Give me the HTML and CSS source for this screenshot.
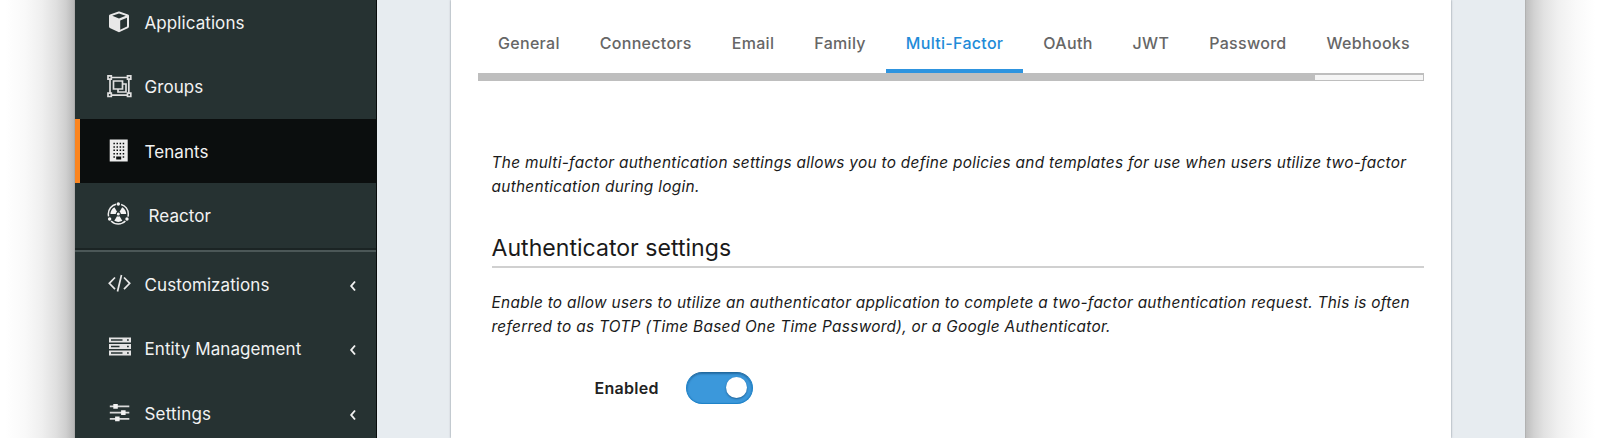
FILE: index.html
```html
<!DOCTYPE html>
<html lang="en">
<head>
<meta charset="utf-8">
<title>Tenants</title>
<link rel="stylesheet" href="styles.css">
</head>
<body>
<div class="window">
  <nav class="sidebar">
    <a class="item"><svg class="icon" viewBox="0 0 28 28"><path d="M13.500 3.600Q14 3.400 14.500 3.600L23 6.400Q24 6.800 24 7.800V18.500Q24 19.500 23.200 19.900L14.600 24Q14 24.300 13.400 24L4.800 19.900Q4 19.500 4 18.500V7.800Q4 6.800 5 6.400Z" fill="#e8e8e8"/><path d="M14 5.600 20.800 7.800 14 10.500 7.200 7.800ZM15.200 12.400 22 9.700V18.600L15.200 21.800Z" fill="#263232"/></svg><span class="label">Applications</span></a>
    <a class="item"><svg class="icon" viewBox="0 0 28 28" fill="none" stroke="#e0e0e0" stroke-width="1.700"><path d="M5 4.500H24M5 22.100H24M5 4.500V22.500M23.800 4.500V22.500"/><path d="M8.500 8H17.500V16H8.500ZM17.500 11H21V19H13V16"/><g fill="#263232"><path d="M3 2.800H6.300V6.100H3ZM22.500 2.800H25.800V6.100H22.500ZM3 20.200H6.300V23.500H3ZM22.500 20.200H25.800V23.500H22.500Z"/></g></svg><span class="label raised">Groups</span></a>
    <a class="item active"><svg class="icon" viewBox="0 0 28 28"><path d="M4.700 2.500H22.700V24.500H4.700Z" fill="#ececec"/><path d="M8.400 6.500H19.700M8.400 9.900H19.700M8.400 13.300H19.700M8.400 16.700H19.700" stroke="#0b0e0e" stroke-width="1.500" stroke-dasharray="1.500 1.600"/><path d="M8.400 19.300H9.900V20.800H8.400ZM17.700 19.300H19.200V20.800H17.700ZM11.200 19.500H16.200V22.500H11.200Z" fill="#0b0e0e"/></svg><span class="label">Tenants</span></a>
    <a class="item"><svg class="icon" viewBox="0 0 28 28"><circle cx="13.300" cy="13" r="10" fill="none" stroke="#eee" stroke-width="1.500" stroke-dasharray="15.800 5.144" stroke-dashoffset="-7.810"/><g fill="#f4f4f4"><circle cx="13.300" cy="3" r="1.700"/><circle cx="4.640" cy="18" r="1.700"/><circle cx="21.960" cy="18" r="1.700"/><circle cx="13.300" cy="13" r="1.500"/><path id="blade" d="M12 15.200 9.300 19.800Q13.300 22 17.300 19.800L14.600 15.200Q13.300 16 12 15.200Z"/><use href="#blade" transform="rotate(120 13.300 13)"/><use href="#blade" transform="rotate(240 13.300 13)"/></g></svg><span class="label indented">Reactor</span></a>
    <hr class="divider">
    <a class="item"><svg class="icon" viewBox="0 0 28 28" fill="none" stroke="#e8e8e8" stroke-width="1.700"><path d="M10 7.500 4.300 13.300 10 19.100M19 7.500 24.700 13.300 19 19.100M16.500 5 12.500 21.500"/></svg><span class="label">Customizations</span><svg class="chev" viewBox="0 0 8 12"><path d="M6 1.500 2.200 6 6 10.500"/></svg></a>
    <a class="item"><svg class="icon" viewBox="0 0 28 28"><path d="M4 3.500H26V8.400H4ZM4 10H26V14.900H4ZM4 16.500H26V21.400H4Z" fill="#e4e4e4"/><path d="M6 5.950H17.500M6 12.450H14.500M6 18.950H17.500M22 5.950H23.800M22 12.450H23.800M22 18.950H23.800" stroke="#263232" stroke-width="1.500"/></svg><span class="label">Entity Management</span><svg class="chev" viewBox="0 0 8 12"><path d="M6 1.500 2.200 6 6 10.500"/></svg></a>
    <a class="item"><svg class="icon" viewBox="0 0 28 28"><path d="M4.800 7.400H24.300M4.800 13.600H24.300M4.800 19.800H24.300" stroke="#d9d9d9" stroke-width="1.700"/><path d="M8.300 5H12.800V9.800H8.300ZM16.100 11.200H20.600V16H16.100ZM10.100 17.400H14.600V22.200H10.100Z" fill="#f2f2f2"/></svg><span class="label wide">Settings</span><svg class="chev" viewBox="0 0 8 12"><path d="M6 1.500 2.200 6 6 10.500"/></svg></a>
  </nav>
  <main class="content">
    <section class="card">
      <div class="tabs">
        <a class="tab">General</a><a class="tab">Connectors</a><a class="tab">Email</a><a class="tab">Family</a><a class="tab selected">Multi-Factor</a><a class="tab">OAuth</a><a class="tab">JWT</a><a class="tab">Password</a><a class="tab">Webhooks</a>
      </div>
      <div class="track"><div class="thumb"></div></div>
      <div class="panel">
        <p class="desc">The multi-factor authentication settings allows you to define policies and templates for use when users utilize two-factor<br>authentication during login.</p>
        <h2 class="heading">Authenticator settings</h2>
        <p class="desc">Enable to allow users to utilize an authenticator application to complete a two-factor authentication request. This is often<br>referred to as TOTP (Time Based One Time Password), or a Google Authenticator.</p>
        <div class="field"><span class="field-label">Enabled</span><span class="toggle"><span class="knob"></span></span></div>
      </div>
    </section>
  </main>
</div>
</body>
</html>
```

FILE: styles.css
```css
* { box-sizing: border-box; }
body {
  margin: 0;
  height: 438px;
  overflow: hidden;
  font-family: Inter, "Liberation Sans", sans-serif;
  background:
    linear-gradient(to left, #b4b4b4, #cfcfcf 9px, #e0e0e0 19px, #efefef 33px, #f9f9f9 50px, #fff 70px) 0 0 / 75px 100% no-repeat,
    linear-gradient(to right, #bcbcbc, #d2d2d2 9px, #e2e2e2 19px, #f0f0f0 33px, #f9f9f9 50px, #fff 70px) 100% 0 / 75px 100% no-repeat,
    #fff;
}
.window { width: 1450px; height: 438px; margin-left: 75px; display: flex; background: #e7ecf0; box-shadow: 0 0 1px #777; }
.sidebar { width: 302px; flex: none; height: 438px; overflow: hidden; background: #263232; border-right: 1px solid #080c0c; display: flex; flex-direction: column; }
.item { height: 64.4px; flex: none; display: flex; align-items: center; padding: 0 19px 0 30px; color: #f2f2f2; font-size: 17px; letter-spacing: .08px; }
.item:first-child { margin-top: -10px; }
.icon { width: 28px; height: 28px; flex: none; margin-right: 11.500px; }
.active { background: #0b0e0e; box-shadow: inset 5px 0 #fb8520; }
.label { white-space: nowrap; padding-top: 2px; }
.raised { padding-top: 1px; }
.indented { margin-left: 4px; }
.wide { letter-spacing: .2px; }
.chev { width: 8px; height: 12px; margin-left: auto; margin-top: 4px; fill: none; stroke: #f2f2f2; stroke-width: 1.900; }
.divider { width: 100%; height: 4px; flex: none; margin: 0; border: 0; border-top: 2px solid #1b2424; background: #4b5757; }
.content { flex: 1; min-width: 0; padding: 0 74px; }
.card { height: 438px; background: #fff; box-shadow: 0 0 2px rgba(50, 65, 75, .6); padding: 0 27px; }
.tabs { height: 73px; display: flex; }
.tab { flex: none; padding: 33px 20px 0; line-height: 21px; font-size: 16px; font-weight: 500; color: #666; letter-spacing: .3px; white-space: nowrap; }
.selected { color: #1f8bd8; border-bottom: 4px solid #2e94df; }
.track { height: 8px; background: #f5f5f5; border: 1px solid #bebebe; border-width: 2px 1px 1px 0; }
.thumb { width: 837px; height: 8px; margin-top: -2px; background: #bebebe; }
.panel { padding: 70px 0 0 13.500px; }
.desc { margin: 0; font-size: 15.400px; line-height: 24px; font-style: italic; color: #1a1a1a; letter-spacing: .29px; white-space: nowrap; }
.heading { margin: 31px 0 23px; height: 38px; font-size: 23.100px; line-height: 36px; font-weight: 400; color: #1a1a1a; border-bottom: 2px solid #d0d0d0; }
.field { display: flex; align-items: center; margin-top: 33px; padding-left: 103px; }
.field-label { width: 91.500px; font-size: 16px; font-weight: 600; color: #222; letter-spacing: .3px; }
.toggle { width: 67px; height: 32px; padding: 4px 5px; display: flex; justify-content: flex-end; border: 1px solid #1f83c9; border-top-color: #216a9f; border-radius: 16px; background: #3b98db; box-shadow: inset 0 1px 2px rgba(0, 40, 80, .4); }
.knob { width: 21px; height: 21px; border-radius: 50%; background: #fff; box-shadow: 0 1px 2px rgba(0, 40, 80, .5); }
```
